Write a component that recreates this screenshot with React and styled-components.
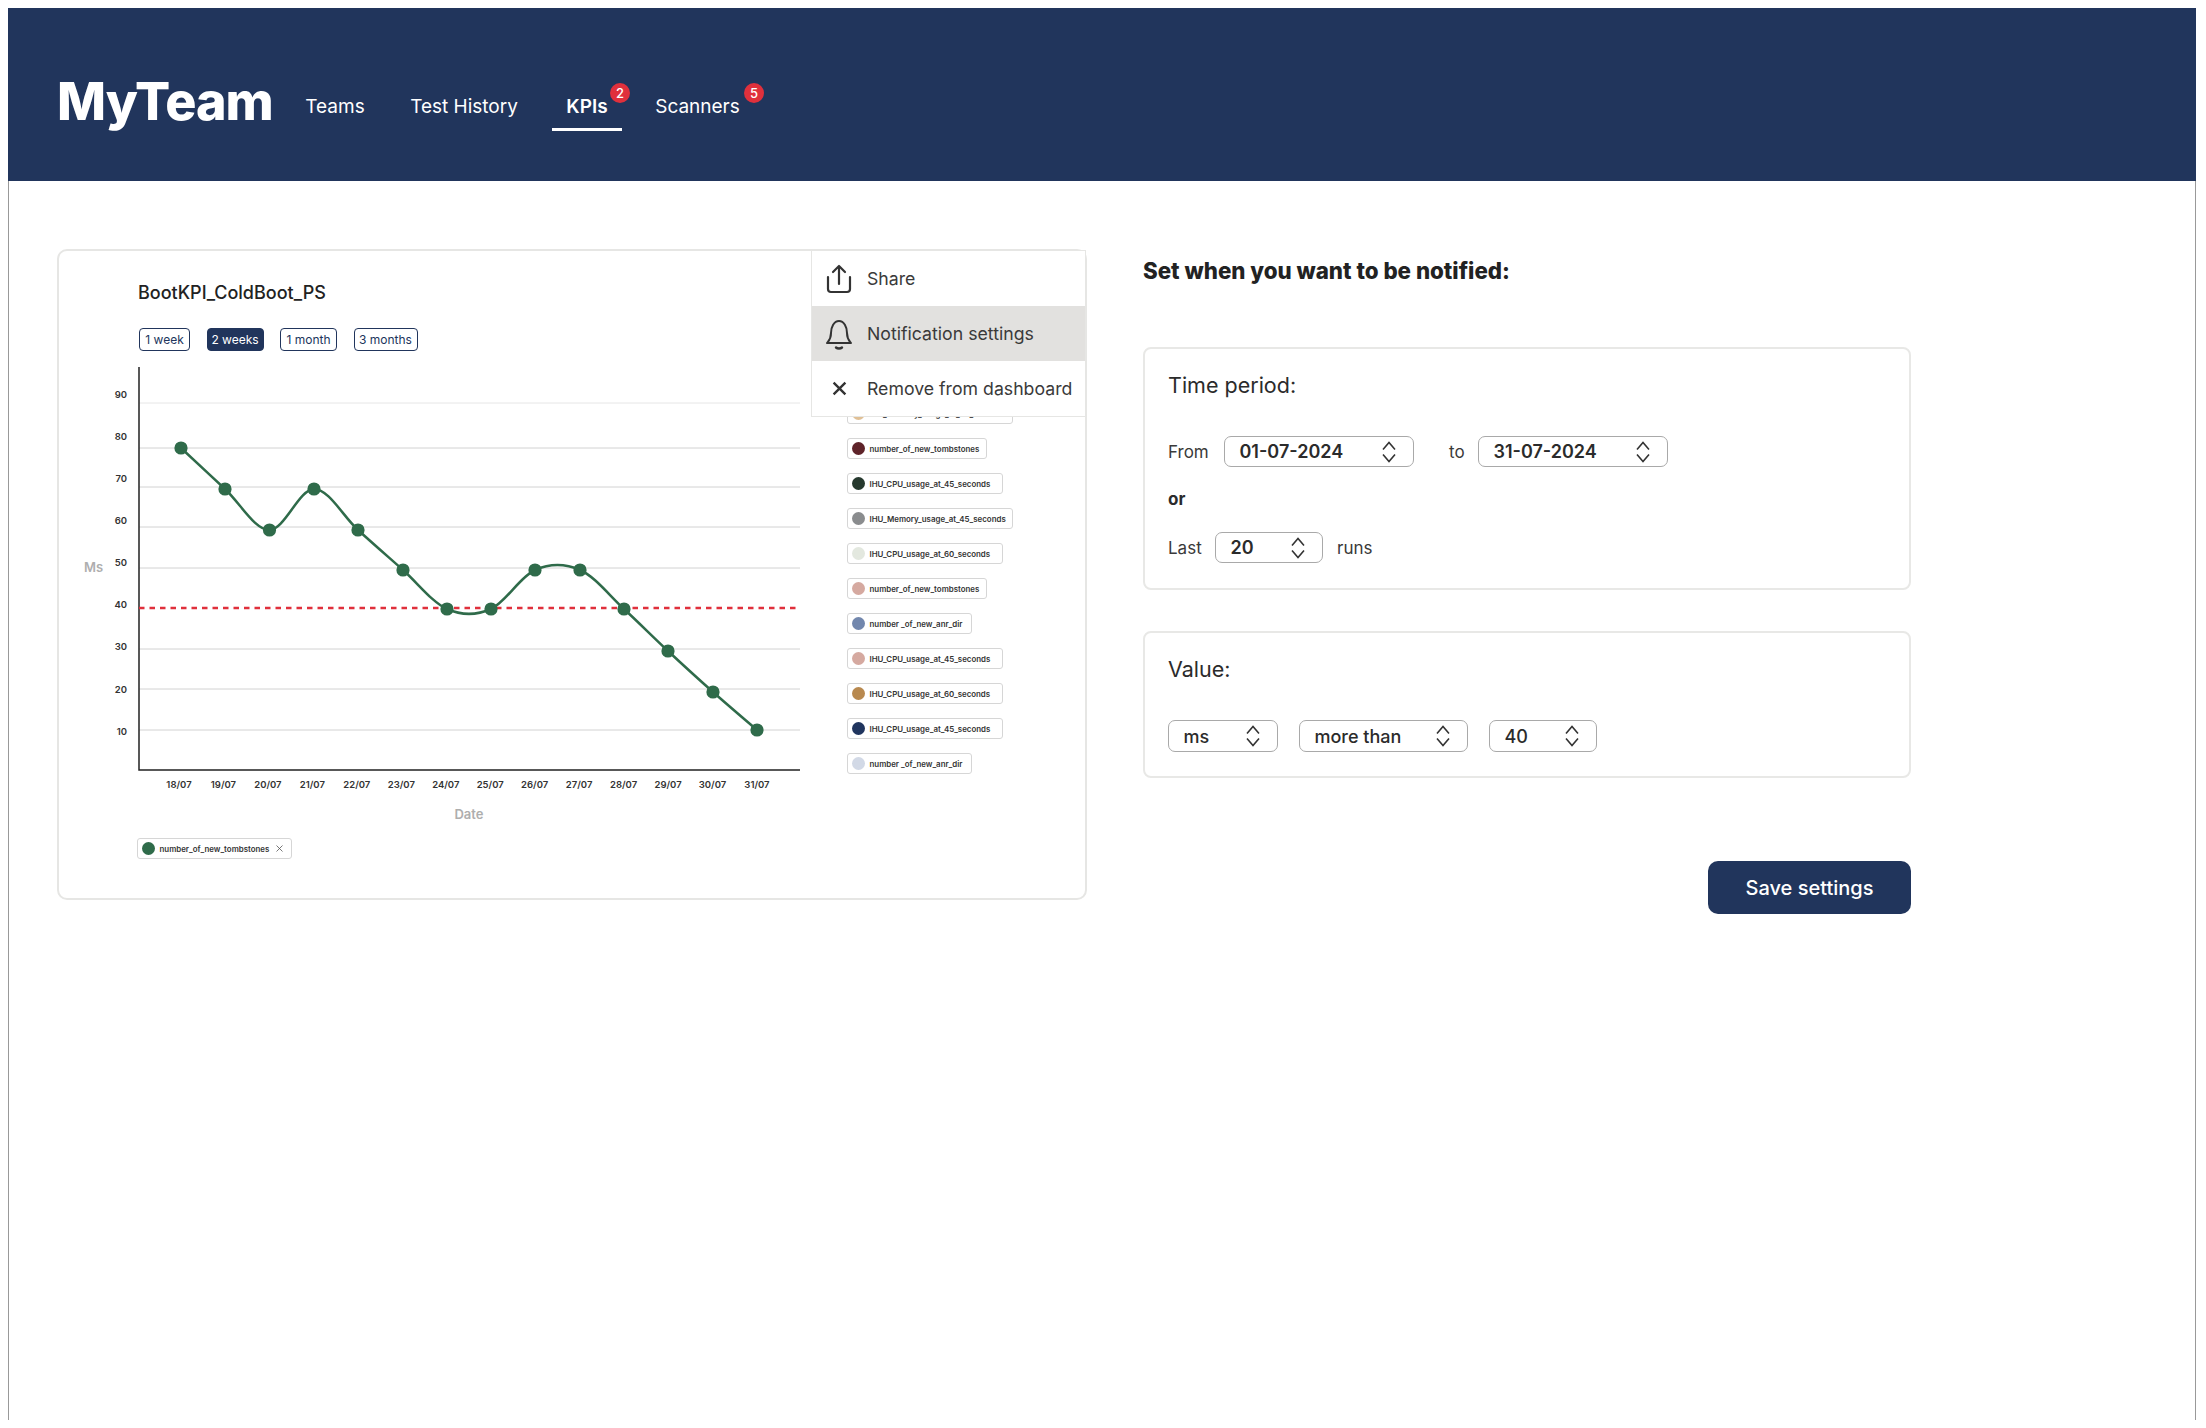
import React from 'react';
import styled, { createGlobalStyle } from 'styled-components';

const NAVY = '#21355c';
const GREEN = '#2f6b4a';

const GlobalStyle = createGlobalStyle`
  html, body {
    margin: 0;
    background: #fff;
    font-family: Inter, "Liberation Sans", sans-serif;
    color: #2b2b2b;
  }
`;

const Frame = styled.div`
  margin: 8px 10px 0 8px;
  min-height: 1412px;
  box-sizing: border-box;
  border-left: 1px solid #999;
  border-right: 1px solid #999;
`;

const Header = styled.header`
  display: flex;
  align-items: center;
  height: 173px;
  margin: 0 -1px;
  padding: 14px 0 0 49px;
  box-sizing: border-box;
  background: ${NAVY};
`;

const Logo = styled.div`
  width: 248px;
  font-size: 52px;
  font-weight: 800;
  letter-spacing: -1px;
  line-height: 60px;
  color: #fff;
`;

const Nav = styled.nav`
  display: flex;
  align-items: center;
  margin-top: 10px;
`;

const NavItem = styled.a`
  position: relative;
  display: block;
  width: ${p => p.$width}px;
  margin-right: ${p => p.$gap}px;
  margin-top: 11px;
  box-sizing: border-box;
  padding-bottom: 8px;
  border-bottom: 3px solid ${p => (p.$active ? '#fff' : 'transparent')};
  font-size: 19px;
  line-height: 26px;
  font-weight: ${p => (p.$active ? 600 : 400)};
  text-align: center;
  white-space: nowrap;
  color: #fff;
`;

const Badge = styled.span`
  position: absolute;
  top: -11px;
  right: ${p => p.$right}px;
  width: 20px;
  height: 20px;
  border-radius: 50%;
  background: #e0303c;
  font-size: 13px;
  font-weight: 500;
  line-height: 20px;
  text-align: center;
  color: #fff;
`;

const Main = styled.main`
  display: flex;
  align-items: flex-start;
  gap: 56px;
  padding: 68px 0 0 48px;
`;

const ChartCard = styled.section`
  position: relative;
  display: flex;
  width: 1030px;
  box-sizing: border-box;
  border: 2px solid #e6e6e4;
  border-radius: 10px;
`;

const ChartColumn = styled.div`
  width: 788px;
  padding: 31px 0 39px;
`;

const ChartTitle = styled.h2`
  margin: 0 0 24px 79px;
  font-size: 18px;
  line-height: 22px;
  font-weight: 500;
  color: #222;
`;

const RangeRow = styled.div`
  display: flex;
  gap: 16.5px;
  margin-left: 80px;
`;

const RangeChip = styled.button`
  height: 23px;
  width: ${p => p.$width}px;
  padding: 0;
  box-sizing: border-box;
  border: 1.5px solid ${NAVY};
  border-radius: 4px;
  background: ${p => (p.$active ? NAVY : '#fff')};
  font-family: inherit;
  font-size: 12px;
  color: ${p => (p.$active ? '#fff' : NAVY)};
`;

const ChartSvg = styled.svg`
  display: block;
  width: 760px;
  height: 470px;
  margin: 9px 0 8px;
`;

const TickText = styled.text`
  font-size: 9.5px;
  font-weight: 600;
  fill: #333;
`;

const AxisTitle = styled.text`
  font-size: 13px;
  font-weight: 600;
  fill: #aeaeae;
`;

const Legend = styled.div`
  display: flex;
  flex-direction: column;
  align-items: flex-start;
  gap: 14px;
  padding-top: 152px;
`;

const LegendChip = styled.div`
  display: flex;
  align-items: center;
  gap: 4.5px;
  width: ${p => p.$width}px;
  height: 21px;
  margin-left: ${p => p.$inset || 0}px;
  padding-left: 4px;
  box-sizing: border-box;
  border: 1px solid #d6d6d6;
  border-radius: 3px;
  font-size: 7.9px;
  font-weight: 600;
  white-space: nowrap;
  color: #333;
`;

const Dot = styled.span`
  flex: none;
  width: 13px;
  height: 13px;
  border-radius: 50%;
  background: ${p => p.$color};
`;

const CloseMark = styled.svg`
  margin-left: 2px;
  width: 7px;
  height: 7px;
`;

const Menu = styled.div`
  position: absolute;
  top: -1px;
  right: -1px;
  width: 275px;
  box-sizing: border-box;
  border: 1.5px solid #e6e6e4;
  background: #fff;
`;

const MenuItem = styled.div`
  display: flex;
  align-items: center;
  height: 55px;
  background: ${p => (p.$active ? '#e2e1df' : 'transparent')};
  font-size: 17.7px;
  color: #3a3a3a;
  white-space: nowrap;
`;

const MenuIcon = styled.span`
  display: flex;
  justify-content: center;
  flex: none;
  width: 54px;
  margin-right: 1px;
`;

const Settings = styled.section`
  display: flex;
  flex-direction: column;
  width: 768px;
  padding-top: 7px;
`;

const Heading = styled.h1`
  margin: 0 0 61px;
  font-size: 22.3px;
  line-height: 30px;
  font-weight: 800;
  color: #222;
`;

const Panel = styled.div`
  margin-bottom: 41px;
  padding: 23px 23px ${p => p.$bottom}px;
  border: 2px solid #e8e8e6;
  border-radius: 8px;
`;

const PanelTitle = styled.div`
  font-size: 21.5px;
  line-height: 26px;
  margin-bottom: ${p => p.$gap}px;
  color: #2b2b2b;
`;

const Row = styled.div`
  display: flex;
  align-items: center;
  gap: ${p => p.$gap || 14}px;
`;

const FieldLabel = styled.span`
  width: ${p => p.$width}px;
  margin-left: ${p => p.$inset || 0}px;
  font-size: 17px;
  color: #3a3a3a;
`;

const OrLabel = styled.div`
  margin: 21px 0 22px;
  font-size: 17px;
  line-height: 22px;
  font-weight: 700;
  color: #2b2b2b;
`;

const Select = styled.div`
  display: flex;
  align-items: center;
  justify-content: space-between;
  width: ${p => p.$width}px;
  height: ${p => p.$height || 31}px;
  padding: 0 17px 0 14.5px;
  box-sizing: border-box;
  border: 1.5px solid #a9a9a9;
  border-radius: 7px;
  font-size: 18px;
  font-weight: ${p => p.$weight || 600};
  color: #2b2b2b;
`;

const SaveButton = styled.button`
  align-self: flex-end;
  width: 203px;
  height: 53px;
  margin-top: 42px;
  border: 0;
  border-radius: 10px;
  background: ${NAVY};
  font-family: inherit;
  font-size: 20px;
  font-weight: 500;
  color: #fff;
`;

const ranges = [
  { label: '1 week', width: 51 },
  { label: '2 weeks', width: 57, active: true },
  { label: '1 month', width: 57 },
  { label: '3 months', width: 64 },
];

const legend = [
  { name: 'IHU_Memory_usage_at_45_seconds', color: '#e0c096', width: 166 },
  { name: 'number_of_new_tombstones', color: '#5e2329', width: 140 },
  { name: 'IHU_CPU_usage_at_45_seconds', color: '#26392e', width: 156 },
  { name: 'IHU_Memory_usage_at_45_seconds', color: '#8a8c8e', width: 166 },
  { name: 'IHU_CPU_usage_at_60_seconds', color: '#e3e8df', width: 156 },
  { name: 'number_of_new_tombstones', color: '#d5a9a0', width: 140 },
  { name: 'number _of_new_anr_dir', color: '#7287ad', width: 125 },
  { name: 'IHU_CPU_usage_at_45_seconds', color: '#d5a9a0', width: 156 },
  { name: 'IHU_CPU_usage_at_60_seconds', color: '#b8894f', width: 156 },
  { name: 'IHU_CPU_usage_at_45_seconds', color: '#20355e', width: 156 },
  { name: 'number _of_new_anr_dir', color: '#d2d9e6', width: 125 },
];

// chart coordinates are page pixels, the viewBox starts at the svg's page corner
const points = [
  [181, 448], [225, 489], [269.5, 530], [314, 489], [358, 530], [403, 570], [447, 609],
  [491, 609], [535, 570], [580, 570], [624, 609], [668, 651], [713, 692], [757, 730],
];
const days = ['18', '19', '20', '21', '22', '23', '24', '25', '26', '27', '28', '29', '30', '31'];
const gridLines = [403, 448, 487, 527, 568, 649, 689, 730];
const ticks = [[90, 394], [80, 436], [70, 478], [60, 520], [50, 562], [40, 604], [30, 646], [20, 689], [10, 731]];

const smoothPath = pts => {
  let d = `M${pts[0][0]} ${pts[0][1]}`;
  for (let i = 0; i < pts.length - 1; i++) {
    const p0 = pts[Math.max(i - 1, 0)];
    const p1 = pts[i];
    const p2 = pts[i + 1];
    const p3 = pts[Math.min(i + 2, pts.length - 1)];
    const c1x = p1[0] + (p2[0] - p0[0]) / 6;
    const c1y = p1[1] + (p2[1] - p0[1]) / 6;
    const c2x = p2[0] - (p3[0] - p1[0]) / 6;
    const c2y = p2[1] - (p3[1] - p1[1]) / 6;
    d += ` C${c1x} ${c1y} ${c2x} ${c2y} ${p2[0]} ${p2[1]}`;
  }
  return d;
};

const Chevrons = () => (
  <svg width="14" height="22" viewBox="0 0 14 22" fill="none" stroke="#333" strokeWidth="1.6">
    <path d="M1 8.5 7 1.5l6 7M1 13.5l6 7 6-7" />
  </svg>
);

const ShareIcon = () => (
  <svg width="26" height="30" viewBox="0 0 26 30" fill="none" stroke="#333" strokeWidth="2.2" strokeLinecap="round" strokeLinejoin="round">
    <path d="M13 20V2M7 8l6-6 6 6" />
    <path d="M2 13v12a3 3 0 0 0 3 3h16a3 3 0 0 0 3-3V13" />
  </svg>
);

const BellIcon = () => (
  <svg width="28" height="32" viewBox="0 0 28 32" fill="none" stroke="#333" strokeWidth="2" strokeLinecap="round" strokeLinejoin="round">
    <path d="M2 25h24c-2-2.5-4-4-4-10 0-6-3-12-8-12S6 9 6 15c0 6-2 7.5-4 10Z" />
    <path d="M11 29.5c1.5 1.3 4.5 1.3 6 0" strokeWidth="2.4" />
  </svg>
);

const CrossIcon = () => (
  <svg width="15" height="15" viewBox="0 0 14 14" fill="none" stroke="#333" strokeWidth="2.2">
    <path d="M1.5 1.5l11 11M12.5 1.5l-11 11" />
  </svg>
);

const Chart = () => (
  <ChartSvg viewBox="59 360 760 470">
    {gridLines.map(y => (
      <line key={y} x1="139" x2="800" y1={y} y2={y} stroke={y === 403 ? '#e6e6e6' : '#d2d2d2'} strokeWidth="1" />
    ))}
    <path d="M139 367V770H800" fill="none" stroke="#222" strokeWidth="1.5" />
    <line x1="139" x2="800" y1="608" y2="608" stroke="#e0303c" strokeWidth="2.5" strokeDasharray="5.5 5" />
    {ticks.map(([value, y]) => (
      <TickText key={value} x="127" y={y + 3.5} textAnchor="end">{value}</TickText>
    ))}
    <AxisTitle x="84" y="572">Ms</AxisTitle>
    <path d={smoothPath(points)} fill="none" stroke={GREEN} strokeWidth="2.5" />
    {points.map(([x, y]) => (
      <circle key={x} cx={x} cy={y} r="6.6" fill={GREEN} />
    ))}
    {days.map((day, i) => (
      <TickText key={day} x={179 + i * 44.46} y="787.5" textAnchor="middle">{day}/07</TickText>
    ))}
    <AxisTitle x="469" y="819" textAnchor="middle">Date</AxisTitle>
  </ChartSvg>
);

export default function App() {
  return (
    <>
      <GlobalStyle />
      <Frame>
        <Header>
          <Logo>MyTeam</Logo>
          <Nav>
            <NavItem $width={60} $gap={44}>Teams</NavItem>
            <NavItem $width={110} $gap={33}>Test History</NavItem>
            <NavItem $width={70} $gap={33} $active>
              KPIs
              <Badge $right={-8}>2</Badge>
            </NavItem>
            <NavItem $width={85} $gap={0}>
              Scanners
              <Badge $right={-24}>5</Badge>
            </NavItem>
          </Nav>
        </Header>
        <Main>
          <ChartCard>
            <ChartColumn>
              <ChartTitle>BootKPI_ColdBoot_PS</ChartTitle>
              <RangeRow>
                {ranges.map(r => (
                  <RangeChip key={r.label} $width={r.width} $active={r.active}>{r.label}</RangeChip>
                ))}
              </RangeRow>
              <Chart />
              <LegendChip $width={155} $inset={78}>
                <Dot $color={GREEN} />
                number_of_new_tombstones
                <CloseMark viewBox="0 0 7 7" fill="none" stroke="#555" strokeWidth="0.8">
                  <path d="M.5.5l6 6M6.5.5l-6 6" />
                </CloseMark>
              </LegendChip>
            </ChartColumn>
            <Legend>
              {legend.map((item, i) => (
                <LegendChip key={i} $width={item.width}>
                  <Dot $color={item.color} />
                  {item.name}
                </LegendChip>
              ))}
            </Legend>
            <Menu>
              <MenuItem>
                <MenuIcon><ShareIcon /></MenuIcon>
                Share
              </MenuItem>
              <MenuItem $active>
                <MenuIcon><BellIcon /></MenuIcon>
                Notification settings
              </MenuItem>
              <MenuItem>
                <MenuIcon><CrossIcon /></MenuIcon>
                Remove from dashboard
              </MenuItem>
            </Menu>
          </ChartCard>
          <Settings>
            <Heading>Set when you want to be notified:</Heading>
            <Panel $bottom={25}>
              <PanelTitle $gap={38}>Time period:</PanelTitle>
              <Row>
                <FieldLabel $width={42}>From</FieldLabel>
                <Select $width={190}>01-07-2024<Chevrons /></Select>
                <FieldLabel $width={15} $inset={21}>to</FieldLabel>
                <Select $width={190}>31-07-2024<Chevrons /></Select>
              </Row>
              <OrLabel>or</OrLabel>
              <Row>
                <FieldLabel $width={33}>Last</FieldLabel>
                <Select $width={108}>20<Chevrons /></Select>
                <FieldLabel $width={40}>runs</FieldLabel>
              </Row>
            </Panel>
            <Panel $bottom={24}>
              <PanelTitle $gap={38}>Value:</PanelTitle>
              <Row $gap={21}>
                <Select $width={110} $height={32} $weight={500}>ms<Chevrons /></Select>
                <Select $width={169} $height={32} $weight={500}>more than<Chevrons /></Select>
                <Select $width={108} $height={32} $weight={500}>40<Chevrons /></Select>
              </Row>
            </Panel>
            <SaveButton>Save settings</SaveButton>
          </Settings>
        </Main>
      </Frame>
    </>
  );
}
